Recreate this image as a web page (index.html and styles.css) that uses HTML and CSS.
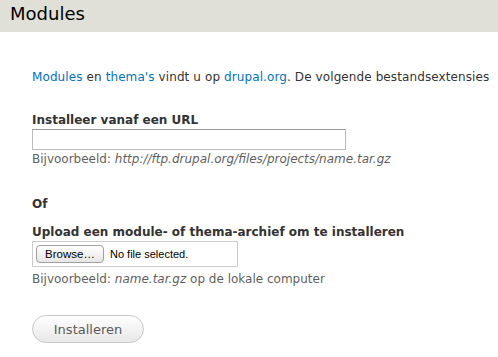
FILE: index.html
```html
<!DOCTYPE html>
<html>
<head>
<title>Modules</title>
<link rel="stylesheet" href="styles.css">
</head>
<body>

<div class="page-header">
  <h1 class="page-title">Modules</h1>
</div>

<div class="content">
  <p class="intro">
    <a href="#">Modules</a> en <a href="#">thema's</a> vindt u op <a href="#">drupal.org</a>. De volgende bestandsextensies
  </p>

  <div class="form-item">
    <label class="form-label" for="url">Installeer vanaf een URL</label>
    <input type="text" class="form-text" id="url">
    <div class="description">Bijvoorbeeld: <em>http://ftp.drupal.org/files/projects/name.tar.gz</em></div>
  </div>

  <p class="or-label">Of</p>

  <div class="form-item">
    <label class="form-label">Upload een module- of thema-archief om te installeren</label>
    <div class="file-box">
      <button type="button" class="browse-button">Browse…</button>
      <span class="file-name">No file selected.</span>
    </div>
    <div class="description description-file">Bijvoorbeeld: <em>name.tar.gz</em> op de lokale computer</div>
  </div>

  <button type="button" class="submit-button">Installeren</button>
</div>

</body>
</html>
```

FILE: styles.css
```css
body {
  margin: 0;
  font-family: "DejaVu Sans", Verdana, sans-serif;
  font-size: 12px;
  color: #333;
  background: #fff;
}

a {
  color: #0074bd;
  text-decoration: none;
}

.page-header {
  background-color: #e0e0d8;
  height: 32px;
}

.page-title {
  margin: 0;
  padding: 5px 10px 0;
  font-size: 18px;
  font-weight: normal;
  line-height: 17px;
  color: #000;
}

.content {
  padding: 36px 0 0 32px;
}

.intro {
  margin: 0;
  line-height: 18px;
  letter-spacing: 0.1px;
  white-space: nowrap;
}

.form-item {
  margin-top: 25px;
}

.form-label {
  display: block;
  font-weight: bold;
  line-height: 18px;
  color: #333;
}

.form-text {
  display: block;
  box-sizing: border-box;
  width: 314px;
  height: 21px;
  margin: 0;
  padding: 2px 4px;
  border: 1px solid #bbb;
  border-top-color: #999;
  border-radius: 0;
  font-family: inherit;
  font-size: 12px;
}

.description {
  line-height: 18px;
  color: #5f5f5f;
  white-space: nowrap;
}

.or-label {
  margin: 27px 0 0;
  font-weight: bold;
  line-height: 18px;
}

.or-label + .form-item {
  margin-top: 10px;
}

.file-box {
  box-sizing: border-box;
  display: flex;
  align-items: center;
  gap: 6px;
  width: 206px;
  height: 26px;
  padding: 0 3px;
  border: 1px solid #ccc;
  font-family: "Liberation Sans", Arial, sans-serif;
  font-size: 11px;
  color: #000;
}

.browse-button {
  box-sizing: border-box;
  width: 68px;
  height: 18px;
  padding: 0;
  border: 1px solid #a0a0a0;
  border-radius: 4px;
  background: linear-gradient(#ffffff, #e6e6e6);
  font-family: "Liberation Sans", Arial, sans-serif;
  font-size: 11.5px;
  color: #000;
}

.description-file {
  margin-top: 3px;
}

.submit-button {
  box-sizing: border-box;
  display: block;
  width: 112px;
  height: 28px;
  margin-top: 27px;
  padding: 0;
  border: 1px solid #c8c8c8;
  border-radius: 14px;
  background: linear-gradient(#fefefe, #e8e8e8);
  font-family: "DejaVu Sans", Verdana, sans-serif;
  font-size: 13px;
  color: #5a5a5a;
}
```
